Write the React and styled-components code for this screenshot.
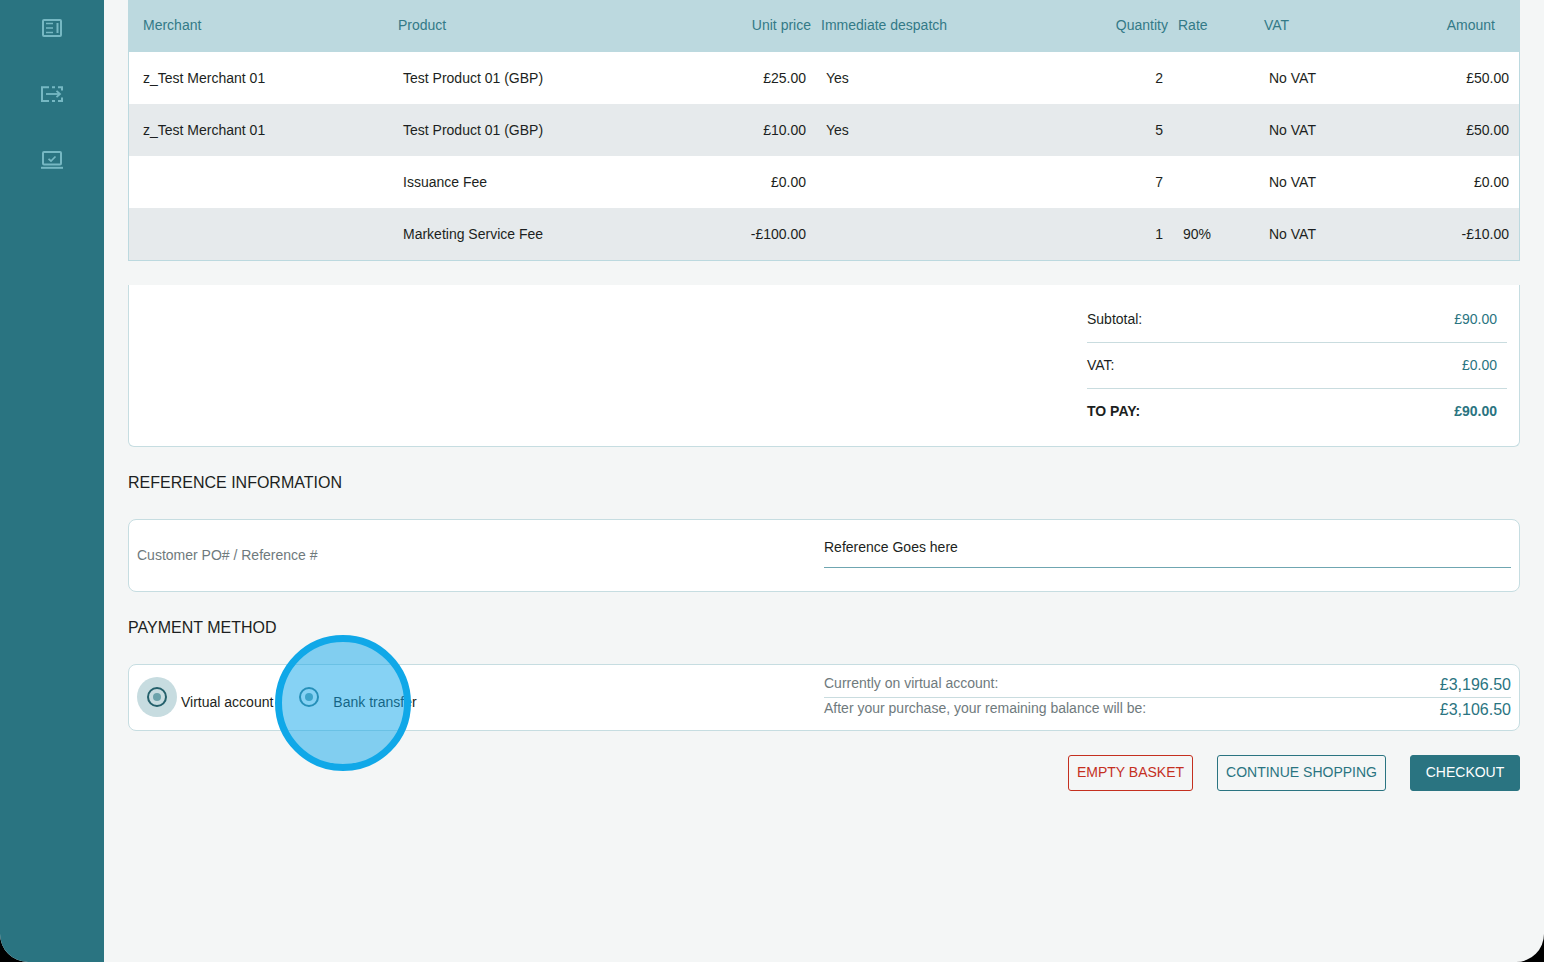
import React from "react";
import styled, { createGlobalStyle } from "styled-components";

const Global = createGlobalStyle`
  html, body { margin: 0; padding: 0; background: #000; height: 100%; overflow: hidden; }
  #root { height: 962px; }
  * { box-sizing: border-box; }
`;

const Page = styled.div`
  position: relative;
  display: flex;
  width: 1544px;
  height: 962px;
  border-radius: 0 0 28px 28px;
  overflow: hidden;
  background: #f4f6f6;
  font-family: "Liberation Sans", Arial, sans-serif;
  font-size: 14px;
  color: #1c1f21;
`;

const Sidebar = styled.nav`
  flex: 0 0 104px;
  display: flex;
  flex-direction: column;
  align-items: center;
  gap: 44px;
  padding-top: 17px;
  background: #2a7481;
`;

const NavIcon = styled.svg`
  display: block;
  width: 22px;
  height: 22px;
  fill: none;
  stroke: #76b8c3;
  stroke-width: 2;
`;

const Main = styled.main`
  flex: 1;
  display: flex;
  flex-direction: column;
  padding: 0 24px;
`;

const COLS = "259px 294px 134px 242px 115px 86px 130px 130px";

const Table = styled.section`
  border: 1px solid #bcd9df;
  border-top: 0;
`;

const HeadRow = styled.div`
  display: grid;
  grid-template-columns: ${COLS};
  height: 52px;
  margin: 0 -1px;
  padding: 0 1px 2px;
  background: #bcd9df;
  align-items: center;
  color: #337a87;
`;

const HeadCell = styled.div`
  padding: 0 ${(p) => p.$pr ?? 5}px 0 ${(p) => p.$pl ?? 5}px;
  text-align: ${(p) => (p.$right ? "right" : "left")};
`;

const Row = styled.div`
  display: grid;
  grid-template-columns: ${COLS};
  height: 52px;
  align-items: center;
  background: ${(p) => (p.$alt ? "#e6eaec" : "#fff")};
`;

const Cell = styled.div`
  padding: 0 10px 0 ${(p) => p.$pl ?? 10}px;
  text-align: ${(p) => (p.$right ? "right" : "left")};
  white-space: nowrap;
`;

const Summary = styled.section`
  display: flex;
  justify-content: flex-end;
  height: 162px;
  margin-top: 24px;
  padding: 12px 12px 0 0;
  background: #fff;
  border: 1px solid #c6dde1;
  border-top: 0;
  border-radius: 0 0 6px 6px;
`;

const SummaryList = styled.div`
  width: 420px;
`;

const SummaryRow = styled.div`
  display: flex;
  justify-content: space-between;
  align-items: center;
  height: 46px;
  padding: 0 10px ${(p) => (p.$last ? 2 : 1)}px 0;
  border-bottom: ${(p) => (p.$last ? "0" : "1px solid #c9dcdf")};
  font-weight: ${(p) => (p.$last ? 700 : 400)};
`;

const Value = styled.span`
  color: #2a7481;
`;

const Heading = styled.h2`
  margin: 26px 0;
  font-size: 16px;
  font-weight: 400;
  line-height: 20px;
  color: #1c1f21;
`;

const Card = styled.section`
  display: flex;
  background: #fff;
  border: 1px solid #c6dde1;
  border-radius: 8px;
`;

const RefCard = styled(Card)`
  height: 73px;
  padding: 0 8px;
`;

const FieldLabel = styled.label`
  flex: 0 0 687px;
  align-self: center;
  padding-bottom: 2px;
  color: #6f7a7d;
`;

const FieldInput = styled.div`
  flex: 1;
  height: 40px;
  margin-top: 8px;
  padding-top: 11px;
  line-height: 16px;
  border-bottom: 1px solid #6fa6b1;
`;

const PayCard = styled(Card)`
  height: 67px;
  padding: 0 8px;
`;

const Options = styled.div`
  flex: 0 0 687px;
  display: flex;
`;

const Option = styled.div`
  display: flex;
  align-items: center;
  height: 65px;
  margin-right: ${(p) => p.$mr ?? 0}px;
`;

const RadioHalo = styled.span`
  display: flex;
  align-items: center;
  justify-content: center;
  width: 40px;
  height: 40px;
  margin: -1px 4px 0 0;
  border-radius: 50%;
  background: ${(p) => (p.$on ? "#c7dce0" : "transparent")};
`;

const Radio = styled.span`
  display: flex;
  align-items: center;
  justify-content: center;
  width: 20px;
  height: 20px;
  border: 2px solid ${(p) => (p.$on ? "#24606b" : "#3f7a88")};
  border-radius: 50%;
  &::after {
    content: "";
    width: 8px;
    height: 8px;
    border-radius: 50%;
    background: #6ca3ab;
  }
`;

const OptionText = styled.span`
  padding-top: 8px;
  color: #1c1f21;
  white-space: nowrap;
`;

const Balances = styled.div`
  flex: 1;
  display: flex;
  flex-direction: column;
`;

const BalanceRow = styled.div`
  display: flex;
  justify-content: space-between;
  align-items: flex-end;
  height: ${(p) => p.$h}px;
  padding-bottom: ${(p) => (p.$line ? 3 : 0)}px;
  border-bottom: ${(p) => (p.$line ? "1px solid #c9dcdf" : "0")};
  color: #6f7a7d;
`;

const BalanceLabel = styled.span`
  margin-bottom: 3px;
`;

const BalanceValue = styled.span`
  font-size: 16px;
  line-height: 18px;
  color: #2a7481;
`;

const Actions = styled.div`
  display: flex;
  justify-content: flex-end;
  gap: 24px;
  margin-top: 24px;
`;

const Button = styled.button`
  width: ${(p) => p.$w}px;
  height: 36px;
  padding: 0 0 2px;
  border: 1px solid ${(p) => p.$color};
  border-radius: 3px;
  background: ${(p) => (p.$solid ? p.$color : "transparent")};
  color: ${(p) => (p.$solid ? "#fff" : p.$color)};
  font: 14px "Liberation Sans", Arial, sans-serif;
  white-space: nowrap;
`;

const Spotlight = styled.div`
  position: absolute;
  left: 275px;
  top: 635px;
  width: 136px;
  height: 136px;
  border: 7px solid #10a8e8;
  border-radius: 50%;
  background: rgba(14, 165, 233, 0.5);
`;

const rows = [
  ["z_Test Merchant 01", "Test Product 01 (GBP)", "£25.00", "Yes", "2", "", "No VAT", "£50.00"],
  ["z_Test Merchant 01", "Test Product 01 (GBP)", "£10.00", "Yes", "5", "", "No VAT", "£50.00"],
  ["", "Issuance Fee", "£0.00", "", "7", "", "No VAT", "£0.00"],
  ["", "Marketing Service Fee", "-£100.00", "", "1", "90%", "No VAT", "-£10.00"],
];

export default function App() {
  return (
    <Page>
      <Global />
      <Sidebar>
        <NavIcon viewBox="0 0 22 22" strokeLinejoin="round">
          <rect x="2" y="3" width="18" height="16" rx="1" />
          <path d="M5 6.500h7M5 11h7M5 15.500h7" strokeWidth="1.700" />
          <path d="M16.500 6v10" />
        </NavIcon>
        <NavIcon viewBox="0 0 22 22">
          <path d="M8 4.300H1V18h7" />
          <path d="M5 11h14" strokeWidth="1.800" />
          <path d="M15.500 7.800 19 11l-3.500 3.200" strokeWidth="1.800" />
          <path d="M11 4.300h3M17 4.300h4V7.500M11 18h3M17 18h4v-3.500" />
        </NavIcon>
        <NavIcon viewBox="0 0 22 22">
          <rect x="2" y="3" width="18" height="12.500" rx="1" />
          <path d="M7.500 9.800 10 12l4.500-4.500" strokeWidth="1.700" />
          <path d="M0 18.800h22" />
        </NavIcon>
      </Sidebar>
      <Main>
        <Table>
          <HeadRow>
            <HeadCell $pl={14}>Merchant</HeadCell>
            <HeadCell $pl={10}>Product</HeadCell>
            <HeadCell $right>Unit price</HeadCell>
            <HeadCell>Immediate despatch</HeadCell>
            <HeadCell $right>Quantity</HeadCell>
            <HeadCell>Rate</HeadCell>
            <HeadCell>VAT</HeadCell>
            <HeadCell $right $pr={24}>Amount</HeadCell>
          </HeadRow>
          {rows.map((r, i) => (
            <Row key={i} $alt={i % 2 === 1}>
              <Cell $pl={14}>{r[0]}</Cell>
              <Cell $pl={15}>{r[1]}</Cell>
              <Cell $right>{r[2]}</Cell>
              <Cell>{r[3]}</Cell>
              <Cell $right>{r[4]}</Cell>
              <Cell>{r[5]}</Cell>
              <Cell>{r[6]}</Cell>
              <Cell $right>{r[7]}</Cell>
            </Row>
          ))}
        </Table>
        <Summary>
          <SummaryList>
            <SummaryRow>
              <span>Subtotal:</span>
              <Value>£90.00</Value>
            </SummaryRow>
            <SummaryRow>
              <span>VAT:</span>
              <Value>£0.00</Value>
            </SummaryRow>
            <SummaryRow $last>
              <span>TO PAY:</span>
              <Value>£90.00</Value>
            </SummaryRow>
          </SummaryList>
        </Summary>
        <Heading>REFERENCE INFORMATION</Heading>
        <RefCard>
          <FieldLabel>Customer PO# / Reference #</FieldLabel>
          <FieldInput>Reference Goes here</FieldInput>
        </RefCard>
        <Heading>PAYMENT METHOD</Heading>
        <PayCard>
          <Options>
            <Option $mr={16}>
              <RadioHalo $on>
                <Radio $on />
              </RadioHalo>
              <OptionText>Virtual account</OptionText>
            </Option>
            <Option>
              <RadioHalo>
                <Radio />
              </RadioHalo>
              <OptionText>Bank transfer</OptionText>
            </Option>
          </Options>
          <Balances>
            <BalanceRow $h={33} $line>
              <BalanceLabel>Currently on virtual account:</BalanceLabel>
              <BalanceValue>£3,196.50</BalanceValue>
            </BalanceRow>
            <BalanceRow $h={21}>
              <BalanceLabel>After your purchase, your remaining balance will be:</BalanceLabel>
              <BalanceValue>£3,106.50</BalanceValue>
            </BalanceRow>
          </Balances>
        </PayCard>
        <Actions>
          <Button $color="#c4301f" $w={125}>EMPTY BASKET</Button>
          <Button $color="#2a7481" $w={169}>CONTINUE SHOPPING</Button>
          <Button $color="#2a7481" $solid $w={110}>CHECKOUT</Button>
        </Actions>
      </Main>
      <Spotlight />
    </Page>
  );
}
